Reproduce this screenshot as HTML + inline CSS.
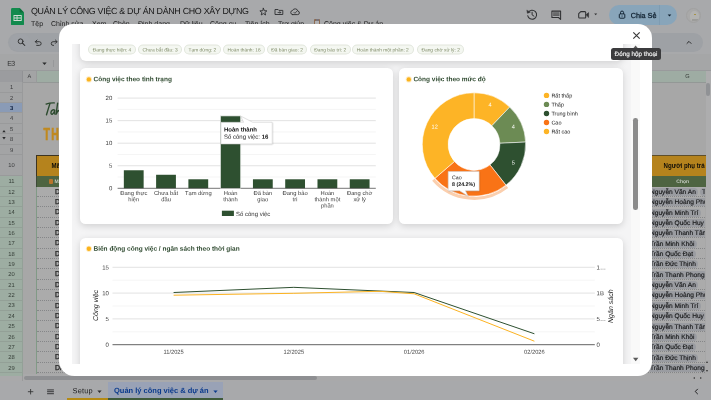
<!DOCTYPE html>
<html lang="vi">
<head>
<meta charset="utf-8">
<title>QUẢN LÝ CÔNG VIỆC & DỰ ÁN DÀNH CHO XÂY DỰNG</title>
<style>
*{box-sizing:border-box;margin:0;padding:0}
html,body{width:711px;height:400px;overflow:hidden;background:#a8a9ab;font-family:"Liberation Sans",sans-serif;}
.abs{position:absolute}
#app{will-change:transform;position:absolute;left:0;top:0;width:711px;height:400px;overflow:hidden;background:#a8a9ab}
.t{position:absolute;white-space:nowrap;line-height:1;transform:rotate(0.03deg)}
/* ---------- sheet chrome ---------- */
#title{left:31px;top:6.6px;font-size:8.9px;color:#141414;letter-spacing:-0.3px}
.menu{top:19.5px;font-size:7px;color:#1c1c1c}
#toolbar{left:8px;top:33px;width:695px;height:19px;border-radius:10px;background:#9ea1a5}
#searchpill{left:10px;top:34px;width:21px;height:17px;border-radius:9px;background:#9fa2a7}
#fbar{left:0;top:54px;width:711px;height:16.5px;background:#a5a6a7;border-bottom:1px solid #999a9c}
#grid{left:0;top:70.5px;width:706px;height:303.5px;background:#a7a7a7}
#colhdr{left:0;top:70.5px;width:706px;height:12px;background:#9eaca3;border-bottom:1px solid #939896}
#corner{left:0;top:70.5px;width:23px;height:12px;background:#9b9c9f;border-right:1.6px solid #919295;border-bottom:1.6px solid #919295}
#colA{left:23px;top:70.5px;width:13.6px;height:12px;background:#a3a4a5;border-right:1px solid #999a9b;border-bottom:1px solid #979899}
.rh{position:absolute;left:0;width:23px;padding-left:0.8px;font-size:5.8px;color:#3a3b3d;text-align:center;border-bottom:1px solid #999a9b;border-right:1px solid #999a9b;background:#a3a4a5}
.rh.g{background:#9dada2;color:#343d36;border-color:#93a097}
.rh.sel{background:#8a9bb6;color:#0c1d3c;font-weight:bold}
.rh span{position:absolute;left:0.8px;right:0;top:calc(50% + 1.3px);transform:translateY(-50%) rotate(0.03deg);line-height:1}
.nm{background:#ababab;position:absolute;left:646px;height:10.36px;width:59px;overflow:hidden;border-bottom:1px dotted #858688;white-space:nowrap}
.nm i{transform:rotate(0.03deg);font-style:normal;position:absolute;left:1.5px;top:1.3px;height:7.8px;padding:0 2.6px 0 2px;border-radius:4px;background:#9a9ca1;font-size:6.6px;line-height:8px;color:#161718;-webkit-text-stroke:0.15px #161718}
.nm i+i{left:auto}
.dl{background:#ababab;position:absolute;left:37px;width:40px;height:10.36px;border-bottom:1px dotted #858688;font-size:6.9px;line-height:10.6px;color:#1c1c1c;text-align:left;padding-left:18px;overflow:hidden;-webkit-text-stroke:0.25px #1c1c1c}
#bottombar{left:0;top:381px;width:711px;height:19px;background:#a8a9ab}
/* ---------- modal ---------- */
#modal{left:59px;top:24px;width:593px;height:351.7px;border-radius:14px 14px 14px 15.5px;background:#fff;overflow:hidden}
#frame{left:13px;top:20px;width:568px;height:319.7px;background:#f4f4f5;overflow:hidden}
.card{position:absolute;background:#fff;border-radius:5.5px;box-shadow:0 2px 7px rgba(0,0,0,0.15)}
.chip{transform:translateY(0.55px) rotate(0.03deg);position:absolute;top:0px;height:10.1px;border:0.6px solid #e1e6dc;background:#f4f7f1;border-radius:5.2px;font-size:4.85px;line-height:9.6px;color:#7f8b68;text-align:center;white-space:nowrap}
.ct{transform:rotate(0.03deg);position:absolute;font-weight:bold;color:#2f4a30;font-size:6.5px;white-space:nowrap;line-height:1}
.dot{position:absolute;width:4.6px;height:4.6px;border-radius:50%;background:#fbb31c;box-shadow:0 0 1.5px #fbb31c}
svg text{font-family:"Liberation Sans",sans-serif}
</style>
</head>
<body>
<div id="app">

<!-- ===== title bar ===== -->
<svg class="abs" style="left:10.5px;top:7.5px" width="13" height="17.5" viewBox="0 0 13 17.5">
  <path d="M1.4 0H8.6L13 4.4V16.1Q13 17.5 11.6 17.5H1.4Q0 17.5 0 16.1V1.4Q0 0 1.4 0Z" fill="#128a4d"/>
  <path d="M8.6 0L13 4.4H9.6Q8.6 4.4 8.6 3.4Z" fill="#0a6e3a"/>
  <path d="M2.5 7h8.2v6H2.5zM3.4 7.9v1.6h2.2V7.9zM6.5 7.9v1.6h3.3V7.9zM3.4 10.4v1.7h2.2v-1.7zM6.5 10.4v1.7h3.3v-1.7z" fill="#cfdcd4" fill-rule="evenodd"/>
</svg>
<div class="t" id="title">QUẢN LÝ CÔNG VIỆC &amp; DỰ ÁN DÀNH CHO XÂY DỰNG</div>

<!-- star / folder / cloud -->
<svg class="abs" style="left:258px;top:7px" width="44" height="11" viewBox="0 0 44 11" fill="none" stroke="#2e2f31" stroke-width="0.9" stroke-linejoin="round" stroke-linecap="round">
  <path d="M5.4 1.3L6.34 3.71L8.92 3.86L6.92 5.49L7.57 7.99L5.4 6.6L3.23 7.99L3.88 5.49L1.88 3.86L4.46 3.71Z"/>
  <path d="M17.4 2.5h2.7l.8.9h3.9v4.1H17.4z"/><path d="M20 5.5h2.7M21.8 4.5l1 1-1 1" stroke-width="0.75"/>
  <path d="M34.7 7.6h4.9a1.75 1.75 0 0 0 .3-3.48 2.85 2.85 0 0 0-5.4-.6 2.05 2.05 0 0 0 .2 4.08z"/><path d="M35.9 5.3l1 1 1.9-2" stroke-width="0.75"/>
</svg>

<!-- menu -->
<div class="t menu" style="left:31.3px">Tệp</div>
<div class="t menu" style="left:51px">Chỉnh sửa</div>
<div class="t menu" style="left:92.2px">Xem</div>
<div class="t menu" style="left:113.3px">Chèn</div>
<div class="t menu" style="left:138.4px">Định dạng</div>
<div class="t menu" style="left:179.9px">Dữ liệu</div>
<div class="t menu" style="left:210.1px">Công cụ</div>
<div class="t menu" style="left:245.4px">Tiện ích</div>
<div class="t menu" style="left:278.2px">Trợ giúp</div>
<div class="abs" style="left:314.3px;top:19.4px;width:6.2px;height:7px;background:#8c6b52;border-radius:1px"></div><div class="abs" style="left:315.3px;top:20.8px;width:4.2px;height:5px;background:#b1b1b3"></div><div class="abs" style="left:316px;top:18.9px;width:2.8px;height:1.9px;background:#77757e;border-radius:0.6px"></div>
<div class="t menu" style="left:323.5px">Công việc &amp; Dự án</div>

<!-- right header icons -->
<svg class="abs" style="left:525px;top:8px" width="80" height="14" viewBox="0 0 80 14" fill="none" stroke="#303133" stroke-width="1.05" stroke-linecap="round" stroke-linejoin="round">
  <path d="M3.3 4.3A4.5 4.5 0 1 1 2.7 7.7"/><path d="M1.9 2.4l.5 2.9 2.7-1z" fill="#303133" stroke-width="0.5"/><path d="M7.1 4.2v2.7l1.8 1.2" stroke-width="1"/>
  <path d="M26.9 3.1h8.7v8.3l-2.1-1.9h-6.6z"/><path d="M28.5 4.9h5.6M28.5 6.1h5.6M28.5 7.3h5.6" stroke-width="0.75"/>
  <path d="M55.8 3.6h4.1a.8.8 0 0 1 .8.8v4.8a.8.8 0 0 1-.8.8h-5.4a.8.8 0 0 1-.8-.8V5.7z"/><path d="M61 6.8l2.6-2.2v4.6z" fill="#303133" stroke-width="0.5"/>
  <path d="M69.2 5.6h3l-1.5 1.7z" fill="#303133" stroke="none"/>
</svg>
<div class="abs" style="left:609.3px;top:5px;width:67.8px;height:19.5px;border-radius:10px;background:#88a5ba"></div>
<div class="abs" style="left:659.4px;top:5px;width:0.8px;height:19.5px;background:#7e9cb2"></div>
<svg class="abs" style="left:617px;top:9px" width="10" height="11" viewBox="0 0 10 11" fill="none" stroke="#0e1f2e" stroke-width="0.95">
  <rect x="2.3" y="4.9" width="5.5" height="4.3" rx="0.8"/><path d="M3.5 4.9V3.6a1.55 1.55 0 0 1 3.1 0v1.3"/><rect x="4.6" y="6.5" width="0.9" height="1.1" fill="#0e1f2e" stroke="none"/>
</svg>
<div class="t" style="left:630px;top:12px;font-size:7.3px;color:#0e1f2e;letter-spacing:-0.05px;-webkit-text-stroke:0.25px #0e1f2e;transform:translate(0.8px,0px) rotate(0.03deg)">Chia Sẻ</div>
<svg class="abs" style="left:666.5px;top:13.8px" width="5" height="3" viewBox="0 0 5 3"><path d="M0.7 0.4h3.6l-1.8 2.1z" fill="#0e1f2e"/></svg>
<div class="abs" style="left:686.2px;top:7.6px;width:15.2px;height:15.2px;border-radius:50%;background:#a9a9a9;border:0.5px solid #a1a1a1;overflow:hidden">
  <div class="abs" style="left:2.6px;top:2px;width:9.5px;height:10px;border-radius:50% 50% 40% 40%;background:#b3b3b1"></div>
  <div class="abs" style="left:6.8px;top:5.2px;width:2.2px;height:1.5px;border-radius:1px;background:#a68f3a"></div>
  <div class="abs" style="left:4.5px;top:10.8px;width:6.5px;height:1.3px;background:#9c9c9a"></div>
</div>

<!-- ===== toolbar ===== -->
<div class="abs" id="toolbar"></div>
<div class="abs" id="searchpill"></div>
<svg class="abs" style="left:16px;top:36px" width="48" height="13" viewBox="0 0 48 13" fill="none" stroke="#2b2c2d" stroke-width="0.9" stroke-linecap="round" stroke-linejoin="round">
  <circle cx="4.6" cy="5.3" r="2.4"/><path d="M6.5 7.2l2.3 2.3" stroke-width="1.05"/>
  <path d="M19.6 5.7h3.7a1.85 1.85 0 0 1 0 3.7h-2.6"/><path d="M21 4l-1.7 1.7L21 7.4"/>
  <path d="M40.8 5.7h-3.7a1.85 1.85 0 0 0 0 3.7h0.5"/><path d="M39.4 4l1.7 1.7-1.7 1.7"/>
</svg>
<svg class="abs" style="left:685px;top:40px" width="8" height="5" viewBox="0 0 8 5" fill="none" stroke="#2a2b2c" stroke-width="1"><path d="M1.7 3.7L4 1.4l2.3 2.3"/></svg>

<!-- ===== formula bar ===== -->
<div class="abs" id="fbar"></div>
<div class="t" style="left:7px;top:59px;font-size:7px;color:#2f3031;letter-spacing:-0.5px;transform:translate(0.2px,0.8px) rotate(0.03deg)">E3</div>
<svg class="abs" style="left:42.3px;top:61.8px" width="5" height="3.4" viewBox="0 0 5 3.4"><path d="M0.3 0.4h4.4L2.5 3z" fill="#2b2c2d"/></svg>
<div class="abs" style="left:52.5px;top:59.6px;width:0.8px;height:7.5px;background:#97989a"></div>

<!-- ===== grid ===== -->
<div class="abs" id="grid"></div>
<div class="abs" id="colhdr"></div>
<div class="abs" id="colA"></div>
<div class="abs" id="corner"></div>
<div class="t" style="left:27px;top:74px;font-size:5.6px;color:#3c3d3f;transform:translate(0.4px,0px) rotate(0.03deg)">A</div>
<div class="t" style="left:685px;top:74px;font-size:5.6px;color:#3c423e;transform:translate(0.2px,0px) rotate(0.03deg)">G</div>
<div class="rh" style="top:82.3px;height:10.38px"><span>1</span></div>
<div class="rh" style="top:92.68px;height:10.38px"><span>2</span></div>
<div class="rh sel" style="top:103.06px;height:10.38px"><span>3</span></div>
<div class="rh" style="top:113.44px;height:10.38px"><span>4</span></div>
<div class="rh" style="top:123.82px;height:10.38px"><span>5</span></div>
<div class="rh" style="top:134.2px;height:10.38px"><span>8</span></div>
<div class="rh" style="top:144.58px;height:10.38px"><span>9</span></div>
<div class="rh" style="top:154.96px;height:21.44px"><span>10</span></div>
<div class="rh g" style="top:176.2px;height:10.36px"><span>11</span></div>
<div class="rh g" style="top:186.56px;height:10.36px"><span>12</span></div>
<div class="rh g" style="top:196.92px;height:10.36px"><span>13</span></div>
<div class="rh g" style="top:207.28px;height:10.36px"><span>14</span></div>
<div class="rh g" style="top:217.64px;height:10.36px"><span>15</span></div>
<div class="rh g" style="top:228px;height:10.36px"><span>16</span></div>
<div class="rh g" style="top:238.36px;height:10.36px"><span>17</span></div>
<div class="rh g" style="top:248.72px;height:10.36px"><span>18</span></div>
<div class="rh g" style="top:259.08px;height:10.36px"><span>19</span></div>
<div class="rh g" style="top:269.44px;height:10.36px"><span>20</span></div>
<div class="rh g" style="top:279.8px;height:10.36px"><span>21</span></div>
<div class="rh g" style="top:290.16px;height:10.36px"><span>22</span></div>
<div class="rh g" style="top:300.52px;height:10.36px"><span>23</span></div>
<div class="rh g" style="top:310.88px;height:10.36px"><span>24</span></div>
<div class="rh g" style="top:321.24px;height:10.36px"><span>25</span></div>
<div class="rh g" style="top:331.6px;height:10.36px"><span>26</span></div>
<div class="rh g" style="top:341.96px;height:10.36px"><span>27</span></div>
<div class="rh g" style="top:352.32px;height:10.36px"><span>28</span></div>
<div class="rh g" style="top:362.68px;height:10.36px"><span>29</span></div>
<div class="rh g" style="top:373.04px;height:2.6px;border-bottom:none"></div>
<div class="rh" style="top:375.6px;height:5.6px;border-bottom:none;background:#a9a9aa"></div>


<svg class="abs" style="left:1.5px;top:129px" width="4" height="12" viewBox="0 0 4 12"><path d="M0.3 3.3h3.4L2 0.9zM0.3 8h3.4L2 10.4z" fill="#2a2b2c"/></svg>
<!-- vertical scrollbar of sheet -->
<div class="abs" style="left:705.6px;top:70.5px;width:5.4px;height:304px;background:#adadae"></div>
<div class="abs" style="left:706.2px;top:83.1px;width:3.7px;height:12.8px;border-radius:2px;background:#909295"></div>
<div class="abs" style="left:705.6px;top:360px;width:5.4px;height:14px;background:#a8a8a9"></div>
<div class="t" style="left:706px;top:360px;font-size:4px;color:#333;transform:translate(0.3px,0.5px) rotate(0.03deg)">▴</div>
<div class="t" style="left:706px;top:369px;font-size:4px;color:#333;transform:translate(0.3px,0px) rotate(0.03deg)">▾</div>

<!-- sheet content: left side -->
<svg class="abs" style="left:43px;top:100px" width="18" height="18" viewBox="0 0 18 18" fill="none" stroke="#2c4a2e" stroke-width="1.4" stroke-linecap="round" stroke-linejoin="round">
  <path d="M3.1 4.1c2.4-.9 5.4-1.3 8.2-1.2"/><path d="M6.9 3.6c-1 3.3-2.4 7.8-3.4 11.2"/>
  <path d="M11.6 10c-1.5-.9-3.2.4-3.6 2.2-.3 1.4.4 2.4 1.5 1.9 1.2-.6 2-2.4 2.3-4 -.3 1.5-.5 3.2.3 4.1"/>
  <path d="M14.6 3.3c-.5 3.5-1.1 7.3-1.3 10.8.6-2 1.7-3.6 3-3.6"/>
</svg>
<div class="t" style="left:43px;top:127px;font-size:15.9px;font-weight:bold;color:#c0891f;-webkit-text-stroke:0.7px #c0891f;transform:translate(0.6px,0.4px) scaleX(0.66);transform-origin:0 0;letter-spacing:1.7px">THEO</div>

<div class="abs" style="left:36.4px;top:155px;width:24px;height:21.4px;background:#b5831d;border-left:1px solid #3d3420;border-top:1px solid #3d3420"></div>
<div class="t" style="left:51px;top:163px;font-size:7.1px;font-weight:bold;color:#0f0d08;transform:translate(0.6px,0.1px) scaleX(0.86);transform-origin:0 0">Mã</div>
<div class="abs" style="left:36.4px;top:176.4px;width:24px;height:10.2px;background:#4e6441;border-left:1px solid #3d4a38"></div>
<div class="abs" style="left:48.6px;top:178.6px;width:4.4px;height:5.4px;background:#b8742c;border-radius:1px"></div>
<div class="t" style="left:54px;top:179px;font-size:5px;font-weight:bold;color:#c5cbc2;transform:translate(0.4px,0.1px) rotate(0.03deg)">Mã</div>
<div class="abs" style="left:36.4px;top:186.6px;width:0.9px;height:187px;background:#819a86"></div>

<!-- sheet content: right side -->
<div class="abs" style="left:646px;top:155px;width:59.6px;height:21.4px;background:#b5831d;border-top:1px solid #5f4f2a"></div>
<div class="t" style="left:663px;top:163px;font-size:7.1px;font-weight:bold;color:#0f0d08;width:48px;overflow:hidden;transform:translate(0.6px,0.1px) scaleX(0.86);transform-origin:0 0">Người phụ trách</div>
<div class="abs" style="left:646px;top:176.4px;width:59.6px;height:10.2px;background:#4e6441"></div>
<div class="t" style="left:676px;top:179px;font-size:5px;font-weight:bold;color:#c5cbc2;transform:translate(0.3px,0.1px) rotate(0.03deg)">Chọn</div>
<div class="nm" style="top:186.56px"><i>Nguyễn Văn An</i><i style="left:53.7px">Trần</i></div>
<div class="nm" style="top:196.92px"><i>Nguyễn Hoàng Phúc</i></div>
<div class="nm" style="top:207.28px"><i>Nguyễn Minh Trí</i></div>
<div class="nm" style="top:217.64px"><i>Nguyễn Quốc Huy</i></div>
<div class="nm" style="top:228px"><i>Nguyễn Thanh Tâm</i></div>
<div class="nm" style="top:238.36px"><i>Trần Minh Khôi</i></div>
<div class="nm" style="top:248.72px"><i>Trần Quốc Đạt</i></div>
<div class="nm" style="top:259.08px"><i>Trần Đức Thịnh</i></div>
<div class="nm" style="top:269.44px"><i>Trần Thanh Phong</i></div>
<div class="nm" style="top:279.8px"><i>Nguyễn Văn An</i></div>
<div class="nm" style="top:290.16px"><i>Nguyễn Hoàng Phúc</i></div>
<div class="nm" style="top:300.52px"><i>Nguyễn Minh Trí</i></div>
<div class="nm" style="top:310.88px"><i>Nguyễn Quốc Huy</i></div>
<div class="nm" style="top:321.24px"><i>Nguyễn Thanh Tâm</i></div>
<div class="nm" style="top:331.6px"><i>Trần Minh Khôi</i></div>
<div class="nm" style="top:341.96px"><i>Trần Quốc Đạt</i></div>
<div class="nm" style="top:352.32px"><i>Trần Đức Thịnh</i></div>
<div class="nm" style="top:362.68px"><i>Trần Thanh Phong</i></div>
<div class="dl" style="top:186.56px">DA-0</div>
<div class="dl" style="top:196.92px">DA-0</div>
<div class="dl" style="top:207.28px">DA-0</div>
<div class="dl" style="top:217.64px">DA-0</div>
<div class="dl" style="top:228px">DA-0</div>
<div class="dl" style="top:238.36px">DA-0</div>
<div class="dl" style="top:248.72px">DA-0</div>
<div class="dl" style="top:259.08px">DA-0</div>
<div class="dl" style="top:269.44px">DA-0</div>
<div class="dl" style="top:279.8px">DA-0</div>
<div class="dl" style="top:290.16px">DA-0</div>
<div class="dl" style="top:300.52px">DA-0</div>
<div class="dl" style="top:310.88px">DA-0</div>
<div class="dl" style="top:321.24px">DA-0</div>
<div class="dl" style="top:331.6px">DA-0</div>
<div class="dl" style="top:341.96px">DA-0</div>
<div class="dl" style="top:352.32px">DA-0</div>
<div class="dl" style="top:362.68px">DA-0</div>


<!-- horizontal scrollbar -->
<div class="abs" style="left:23px;top:374.4px;width:688px;height:6.8px;background:#a9a9aa"></div>
<div class="abs" style="left:24px;top:375.8px;width:293px;height:4.6px;border-radius:2.3px;background:#8e8f92"></div>
<div class="t" style="left:692px;top:375px;font-size:4px;color:#444;letter-spacing:5.5px;transform:translate(0.6px,0.6px) rotate(0.03deg)">◂▸</div>

<!-- ===== bottom bar ===== -->
<div class="abs" id="bottombar"></div>
<svg class="abs" style="left:26px;top:386.5px" width="30" height="9" viewBox="0 0 30 9" stroke="#303133" stroke-width="0.85" fill="none">
  <path d="M4.6 2v5.4M1.9 4.7h5.4"/><path d="M21.1 2.9h6.8M21.1 4.7h6.8M21.1 6.5h6.8" stroke-width="1.25" stroke="#4d4e50"/>
</svg>
<div class="abs" style="left:67px;top:398px;width:41px;height:2px;background:#b48a14"></div>
<div class="t" style="left:72px;top:387px;font-size:7.4px;color:#1f2021;letter-spacing:0.2px;transform:translate(0.6px,0.2px) rotate(0.03deg)">Setup</div>
<svg class="abs" style="left:97.3px;top:390px" width="5" height="3.4" viewBox="0 0 5 3.4"><path d="M0.4 0.4h4.2L2.5 2.9z" fill="#2b2c2d"/></svg>
<div class="abs" style="left:108px;top:381.6px;width:115px;height:18.4px;background:#99a2b6"></div>
<div class="abs" style="left:108px;top:397.6px;width:115px;height:2.4px;background:#3f5a3a"></div>
<div class="t" style="left:114px;top:387px;font-size:7.5px;font-weight:bold;color:#0a3a8c;transform:translate(0px,0.1px) rotate(0.03deg)">Quản lý công việc &amp; dự án</div>
<svg class="abs" style="left:213px;top:389.8px" width="5" height="3.4" viewBox="0 0 5 3.4"><path d="M0.4 0.4h4.2L2.5 2.9z" fill="#0a3a8c"/></svg>
<svg class="abs" style="left:693.8px;top:388px" width="5" height="7" viewBox="0 0 5 7" fill="none" stroke="#202122" stroke-width="1"><path d="M3.8 0.9L1.2 3.5l2.6 2.6"/></svg>

<!-- ===== MODAL ===== -->
<div class="abs" id="modal">
<div class="abs" id="frame">
<div class="card" style="left:8px;top:-14px;width:543.3px;height:31px;border-radius:0 0 6px 6px"></div>
<div class="card" style="left:8px;top:24.1px;width:313.3px;height:156.4px;"></div>
<div class="card" style="left:327px;top:24.1px;width:224.3px;height:156.4px;"></div>
<div class="card" style="left:8px;top:194.1px;width:543.3px;height:181.9px;"></div>
<div class="abs" style="left:559px;top:0;width:9px;height:320px;background:#f9f9f9"></div>
<div class="abs" style="left:561.3px;top:74px;width:4.6px;height:92.4px;border-radius:2.3px;background:#8b8b8b"></div>
<div class="chip" style="left:15.9px;width:48.1px">Đang thực hiện: 4</div>
<div class="chip" style="left:66px;width:44.2px">Chưa bắt đầu: 3</div>
<div class="chip" style="left:112.1px;width:36.9px">Tạm dừng: 2</div>
<div class="chip" style="left:151px;width:42.2px">Hoàn thành: 16</div>
<div class="chip" style="left:195.2px;width:40.2px">Đã bàn giao: 2</div>
<div class="chip" style="left:237.5px;width:40.6px">Đang bảo trì: 2</div>
<div class="chip" style="left:280.4px;width:61.6px">Hoàn thành một phần: 2</div>
<div class="chip" style="left:344.5px;width:47.4px">Đang chờ xử lý: 2</div>
<div class="ct" style="left:21px;top:32px;transform:translate(0.5px,0.35px) rotate(0.03deg)">Công việc theo tình trạng</div>
<div class="ct" style="left:341px;top:32px;transform:translate(0.4px,0.35px) rotate(0.03deg)">Công việc theo mức độ</div>
<div class="ct" style="left:21px;top:201px;transform:translate(0.5px,0.75px) rotate(0.03deg)">Biến động công việc / ngân sách theo thời gian</div>
<svg class="abs" style="left:0;top:0" width="568" height="320" viewBox="72 44 568 320" font-size="6">
<path d="M117.6 177.03H375.8" stroke="#ececec" stroke-width="0.55"/>
<path d="M117.6 154.48H375.8" stroke="#ececec" stroke-width="0.55"/>
<path d="M117.6 131.93H375.8" stroke="#ececec" stroke-width="0.55"/>
<path d="M117.6 109.38H375.8" stroke="#ececec" stroke-width="0.55"/>
<path d="M117.6 165.75H375.8" stroke="#cfcfcf" stroke-width="0.6"/>
<path d="M117.6 143.2H375.8" stroke="#cfcfcf" stroke-width="0.6"/>
<path d="M117.6 120.65H375.8" stroke="#cfcfcf" stroke-width="0.6"/>
<path d="M117.6 98.1H375.8" stroke="#cfcfcf" stroke-width="0.6"/>
<text transform="translate(112.3 190.2) rotate(0.03)" text-anchor="end" fill="#404040">0</text>
<text transform="translate(112.3 167.65) rotate(0.03)" text-anchor="end" fill="#404040">5</text>
<text transform="translate(112.3 145.1) rotate(0.03)" text-anchor="end" fill="#404040">10</text>
<text transform="translate(112.3 122.55) rotate(0.03)" text-anchor="end" fill="#404040">15</text>
<text transform="translate(112.3 100) rotate(0.03)" text-anchor="end" fill="#404040">20</text>
<rect x="123.84" y="170.26" width="19.8" height="18.04" fill="#2e5030"/>
<rect x="156.11" y="174.77" width="19.8" height="13.53" fill="#2e5030"/>
<rect x="188.39" y="179.28" width="19.8" height="9.02" fill="#2e5030"/>
<rect x="220.66" y="116.14" width="19.8" height="72.16" fill="#2e5030"/>
<rect x="252.94" y="179.28" width="19.8" height="9.02" fill="#2e5030"/>
<rect x="285.21" y="179.28" width="19.8" height="9.02" fill="#2e5030"/>
<rect x="317.49" y="179.28" width="19.8" height="9.02" fill="#2e5030"/>
<rect x="349.76" y="179.28" width="19.8" height="9.02" fill="#2e5030"/>
<path d="M117.6 188.3H375.8" stroke="#3a3a3a" stroke-width="0.7"/>
<text transform="translate(133.74 195) rotate(0.03)" text-anchor="middle" fill="#3c3c3c" font-size="5.8">Đang thực</text>
<text transform="translate(133.74 201.25) rotate(0.03)" text-anchor="middle" fill="#3c3c3c" font-size="5.8">hiện</text>
<text transform="translate(166.01 195) rotate(0.03)" text-anchor="middle" fill="#3c3c3c" font-size="5.8">Chưa bắt</text>
<text transform="translate(166.01 201.25) rotate(0.03)" text-anchor="middle" fill="#3c3c3c" font-size="5.8">đầu</text>
<text transform="translate(198.29 195) rotate(0.03)" text-anchor="middle" fill="#3c3c3c" font-size="5.8">Tạm dừng</text>
<text transform="translate(230.56 195) rotate(0.03)" text-anchor="middle" fill="#3c3c3c" font-size="5.8">Hoàn</text>
<text transform="translate(230.56 201.25) rotate(0.03)" text-anchor="middle" fill="#3c3c3c" font-size="5.8">thành</text>
<text transform="translate(262.84 195) rotate(0.03)" text-anchor="middle" fill="#3c3c3c" font-size="5.8">Đã bàn</text>
<text transform="translate(262.84 201.25) rotate(0.03)" text-anchor="middle" fill="#3c3c3c" font-size="5.8">giao</text>
<text transform="translate(295.11 195) rotate(0.03)" text-anchor="middle" fill="#3c3c3c" font-size="5.8">Đang bảo</text>
<text transform="translate(295.11 201.25) rotate(0.03)" text-anchor="middle" fill="#3c3c3c" font-size="5.8">trì</text>
<text transform="translate(327.39 195) rotate(0.03)" text-anchor="middle" fill="#3c3c3c" font-size="5.8">Hoàn</text>
<text transform="translate(327.39 201.25) rotate(0.03)" text-anchor="middle" fill="#3c3c3c" font-size="5.8">thành một</text>
<text transform="translate(327.39 207.5) rotate(0.03)" text-anchor="middle" fill="#3c3c3c" font-size="5.8">phần</text>
<text transform="translate(359.66 195) rotate(0.03)" text-anchor="middle" fill="#3c3c3c" font-size="5.8">Đang chờ</text>
<text transform="translate(359.66 201.25) rotate(0.03)" text-anchor="middle" fill="#3c3c3c" font-size="5.8">xử lý</text>
<rect x="221.9" y="210.7" width="12" height="5.3" fill="#2e5030"/>
<text transform="translate(236 215.9) rotate(0.03)" fill="#333">Số công việc</text>
<rect x="220.36" y="115.84" width="20.4" height="72.46" fill="none" stroke="#d7dcd7" stroke-width="0.6"/>
<path d="M221 122.3H243.6L240.8 116.2L252.7 122.3H272.2V143.9H221Z" fill="#fff" stroke="#cfcfcf" stroke-width="0.55" filter="url(#sh)"/>
<text transform="translate(224 131.6) rotate(0.03)" font-weight="bold" fill="#111">Hoàn thành</text>
<text transform="translate(224 138.7) rotate(0.03)" fill="#222">Số công việc: <tspan font-weight="bold" fill="#111">16</tspan></text>
<path d="M474 92.8A51.7 51.7 0 0 1 509.68 107.08L491.87 125.76A25.9 25.9 0 0 0 474 118.6Z" fill="#fdb426" stroke="#fff" stroke-width="0.55"/>
<path d="M509.68 107.08A51.7 51.7 0 0 1 525.64 142.04L499.87 143.27A25.9 25.9 0 0 0 491.87 125.76Z" fill="#6c8b54" stroke="#fff" stroke-width="0.55"/>
<path d="M525.64 142.04A51.7 51.7 0 0 1 505.96 185.14L490.01 164.86A25.9 25.9 0 0 0 499.87 143.27Z" fill="#2e5030" stroke="#fff" stroke-width="0.55"/>
<path d="M505.96 185.14A51.7 51.7 0 0 1 434.93 178.36L454.43 161.46A25.9 25.9 0 0 0 490.01 164.86Z" fill="#f97316" stroke="#fff" stroke-width="0.55"/>
<path d="M434.93 178.36A51.7 51.7 0 0 1 474 92.8L474 118.6A25.9 25.9 0 0 0 454.43 161.46Z" fill="#fdb426" stroke="#fff" stroke-width="0.55"/>
<text transform="translate(490.06 106.39) rotate(0.03)" text-anchor="middle" fill="#fff" font-size="5.6">4</text>
<text transform="translate(513.3 128.55) rotate(0.03)" text-anchor="middle" fill="#fff" font-size="5.6">4</text>
<text transform="translate(513.3 164.45) rotate(0.03)" text-anchor="middle" fill="#fff" font-size="5.6">5</text>
<text transform="translate(434.7 128.55) rotate(0.03)" text-anchor="middle" fill="#fff" font-size="5.6">12</text>
<path d="M507.29 186.83A53.85 53.85 0 0 1 433.3 179.76" fill="none" stroke="#fbcfae" stroke-width="3"/>
<path d="M448.2 171.5H479.1V190.7H465.4L468 196L459.6 190.7H448.2Z" fill="#fff" stroke="#cfcfcf" stroke-width="0.55" filter="url(#sh)"/>
<text transform="translate(452 179.3) rotate(0.03)" fill="#222" font-size="5.3">Cao</text>
<text transform="translate(452 186) rotate(0.03)" font-weight="bold" fill="#111" font-size="5.3">8 (24.2%)</text>
<circle cx="546.5" cy="95.4" r="2.7" fill="#fdb426"/>
<text transform="translate(551.4 97.5) rotate(0.03)" fill="#222" font-size="5.5">Rất thấp</text>
<circle cx="546.5" cy="104.42" r="2.7" fill="#6c8b54"/>
<text transform="translate(551.4 106.52) rotate(0.03)" fill="#222" font-size="5.5">Thấp</text>
<circle cx="546.5" cy="113.44" r="2.7" fill="#2e5030"/>
<text transform="translate(551.4 115.54) rotate(0.03)" fill="#222" font-size="5.5">Trung bình</text>
<circle cx="546.5" cy="122.46" r="2.7" fill="#f97316"/>
<text transform="translate(551.4 124.56) rotate(0.03)" fill="#222" font-size="5.5">Cao</text>
<circle cx="546.5" cy="131.48" r="2.7" fill="#fdb426"/>
<text transform="translate(551.4 133.58) rotate(0.03)" fill="#222" font-size="5.5">Rất cao</text>
<path d="M112.5 331.8H594.8" stroke="#ececec" stroke-width="0.55"/>
<path d="M112.5 306H594.8" stroke="#ececec" stroke-width="0.55"/>
<path d="M112.5 280.2H594.8" stroke="#ececec" stroke-width="0.55"/>
<path d="M112.5 318.9H594.8" stroke="#cfcfcf" stroke-width="0.6"/>
<path d="M112.5 293.1H594.8" stroke="#cfcfcf" stroke-width="0.6"/>
<path d="M112.5 267.3H594.8" stroke="#cfcfcf" stroke-width="0.6"/>
<path d="M112.5 344.7H594.8" stroke="#3a3a3a" stroke-width="0.8"/>
<text transform="translate(108.9 346.8) rotate(0.03)" text-anchor="end" fill="#404040">0</text>
<text transform="translate(108.9 321) rotate(0.03)" text-anchor="end" fill="#404040">5</text>
<text transform="translate(108.9 295.2) rotate(0.03)" text-anchor="end" fill="#404040">10</text>
<text transform="translate(108.9 269.4) rotate(0.03)" text-anchor="end" fill="#404040">15</text>
<text transform="translate(596.6 346.8) rotate(0.03)" fill="#404040">0</text>
<text transform="translate(596.6 321) rotate(0.03)" fill="#404040">5…</text>
<text transform="translate(596.6 295.2) rotate(0.03)" fill="#404040">1B</text>
<text transform="translate(596.6 269.4) rotate(0.03)" fill="#404040">1…</text>
<text transform="translate(173.6 353.8) rotate(0.03)" text-anchor="middle" fill="#404040" font-size="5.7">11/2025</text>
<text transform="translate(293.8 353.8) rotate(0.03)" text-anchor="middle" fill="#404040" font-size="5.7">12/2025</text>
<text transform="translate(414.1 353.8) rotate(0.03)" text-anchor="middle" fill="#404040" font-size="5.7">01/2026</text>
<text transform="translate(534.4 353.8) rotate(0.03)" text-anchor="middle" fill="#404040" font-size="5.7">02/2026</text>
<text transform="translate(98 305.5) rotate(-89.97)" text-anchor="middle" font-style="italic" font-size="7" fill="#222">Công việc</text>
<text transform="translate(613.1 306.2) rotate(-89.97)" text-anchor="middle" font-style="italic" font-size="7" fill="#222">Ngân sách</text>
<polyline points="173.6,292.5 293.8,287.34 414.1,292.5 534.4,333.78" fill="none" stroke="#2e5030" stroke-width="1"/>
<polyline points="173.6,295.2 293.8,293.3 380,291.3 414.1,293.8 534.4,341.2" fill="none" stroke="#fcb322" stroke-width="1"/>
<circle cx="88.9" cy="79.4" r="3.1" fill="#fbb31c" opacity="0.25"/><circle cx="88.9" cy="79.4" r="2.2" fill="#fbb31c"/>
<circle cx="408.8" cy="79.4" r="3.1" fill="#fbb31c" opacity="0.25"/><circle cx="408.8" cy="79.4" r="2.2" fill="#fbb31c"/>
<circle cx="88.9" cy="248.8" r="3.1" fill="#fbb31c" opacity="0.25"/><circle cx="88.9" cy="248.8" r="2.2" fill="#fbb31c"/>
<path d="M633 357.8h5.4l-2.7 3.4z" fill="#5a5a5a"/>
<path d="M632.9 48.8h5.4l-2.7-3.4z" fill="#5a5a5a"/>
<defs><filter id="sh" x="-10%" y="-10%" width="125%" height="135%"><feDropShadow dx="0.4" dy="0.6" stdDeviation="0.6" flood-color="#000" flood-opacity="0.22"/></filter></defs>
</svg>
</div>
<svg class="abs" style="left:572.5px;top:7.1px" width="9" height="9" viewBox="0 0 9 9" stroke="#3a3a3a" stroke-width="1.15" fill="none"><path d="M1.3 1.3l6.4 6.4M7.7 1.3L1.3 7.7"/></svg>
</div>
<div class="abs" style="left:610.8px;top:48.1px;width:50.2px;height:11.7px;border-radius:2.5px;background:#3b3b3d"></div>
<div class="t" style="left:614px;top:50px;font-size:6.3px;color:#f1f1f1;-webkit-text-stroke:0.15px #f1f1f1;transform:translate(0.6px,0.9px) rotate(0.03deg)">Đóng hộp thoại</div>

</div>
</body>
</html>
